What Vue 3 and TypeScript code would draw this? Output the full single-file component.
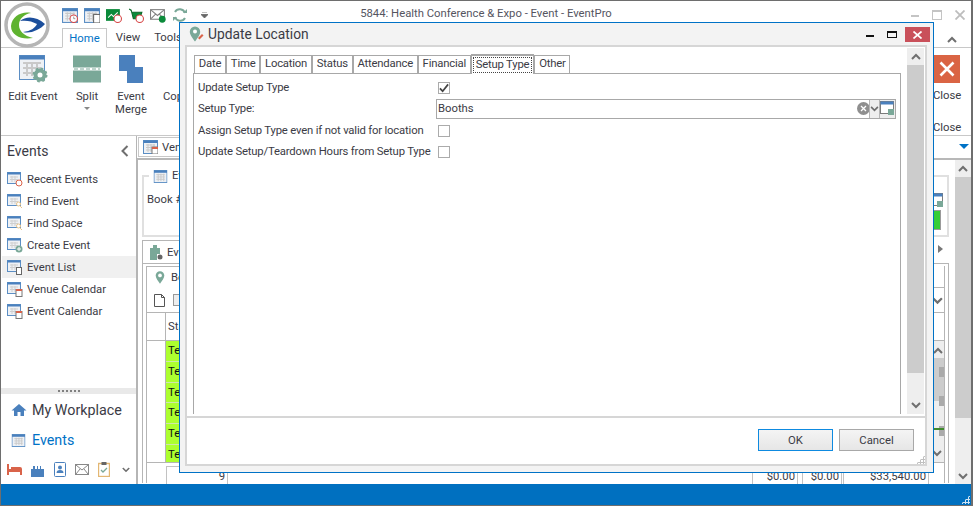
<script setup lang="ts">
const navItems = [
  { label: 'Recent Events', badge: 'clock' },
  { label: 'Find Event', badge: 'find' },
  { label: 'Find Space', badge: 'find' },
  { label: 'Create Event', badge: 'plus' },
  { label: 'Event List', badge: 'list', active: true },
  { label: 'Venue Calendar', badge: 'cal' },
  { label: 'Event Calendar', badge: 'cal' },
]
const tabs = ['Date', 'Time', 'Location', 'Status', 'Attendance', 'Financial', 'Setup Type', 'Other']
const rows = [
  { label: 'Update Setup Type', kind: 'check', on: true },
  { label: 'Setup Type:', kind: 'combo' },
  { label: 'Assign Setup Type even if not valid for location', kind: 'check', on: false },
  { label: 'Update Setup/Teardown Hours from Setup Type', kind: 'check', on: false },
]
const greenRows = [0, 1, 2, 3, 4, 5]
</script>

<template>
  <div class="window">
    <svg class="defs" width="0" height="0">
      <symbol id="cal" viewBox="0 0 15 14">
        <rect x="0.5" y="0.5" width="14" height="13" fill="#eef1f5" stroke="#5b8ec4" />
        <rect x="0.5" y="0.5" width="14" height="2.5" fill="#4a80bd" />
        <path d="M3 5h9M3 7.5h9M3 10h9M5 4v8M8 4v8M11 4v8" stroke="#c9c9c9" stroke-width="1" fill="none" />
      </symbol>
      <symbol id="pin" viewBox="0 0 12 16">
        <path d="M6 0.5a5.2 5.2 0 0 1 5.2 5.2C11.2 9 8 12.500 6 15.500 4 12.500 0.800 9 0.800 5.700A5.200 5.200 0 0 1 6 0.500z" fill="#7aa898" />
        <circle cx="6" cy="5.500" r="2.200" fill="#fff" />
      </symbol>
      <symbol id="chev" viewBox="0 0 10 7">
        <path d="M1 6l4-4 4 4" fill="none" stroke="#6f6f6f" stroke-width="2" />
      </symbol>
      <symbol id="chevd" viewBox="0 0 10 7">
        <path d="M1 1l4 4 4-4" fill="none" stroke="#6f6f6f" stroke-width="2" />
      </symbol>
      <symbol id="lookup" viewBox="0 0 15 15">
        <rect x="0.500" y="0.500" width="13" height="12" fill="#fff" stroke="#7c7c7c" />
        <rect x="0.500" y="0.500" width="13" height="3" fill="#4a80bd" />
        <rect x="8" y="8" width="6" height="6" fill="#7aa898" />
      </symbol>
    </svg>

    <header class="titlebar">
      <div class="logo">
        <svg viewBox="0 0 46 46" width="46" height="46">
          <circle cx="23" cy="23" r="21" fill="#fff" stroke="#b5b5b5" stroke-width="3.500" />
          <path d="M7 24C8 14 18 9 27 11 20 12 15 17 15 23c0 6 5 11 14 13C18 38 7 34 7 24z" fill="#5fb330" />
          <path d="M16 19c6-5 16-5 25 3-5 6-15 10-22 8 8-1 12-4 14-8-5-3-11-4-17-3z" fill="#1c4f9c" />
        </svg>
      </div>
      <div class="quick">
        <svg class="qi" viewBox="0 0 15 14"><use href="#cal" /><circle cx="11" cy="10" r="3.500" fill="#fff" stroke="#d64545" /><path d="M11 8v2h1.500" stroke="#666" stroke-width="0.600" fill="none" /></svg>
        <svg class="qi" viewBox="0 0 15 14"><use href="#cal" /><rect x="9" y="6" width="6" height="8" fill="#fff" stroke="#666" /></svg>
        <svg class="qi" viewBox="0 0 15 14"><rect x="0" y="1" width="13" height="11" fill="#0b8a3a" /><path d="M2 9l3-3 2 2 4-4" stroke="#fff" fill="none" /><circle cx="11" cy="10" r="3.500" fill="#fff" stroke="#d64545" /></svg>
        <svg class="qi" viewBox="0 0 15 14"><path d="M1 1l2 1 2 8h6l2-6H4" fill="#0b8a3a" stroke="#0b6a2a" /><circle cx="11" cy="10" r="3.500" fill="#fff" stroke="#d64545" /></svg>
        <svg class="qi" viewBox="0 0 15 14"><rect x="0.500" y="1.500" width="13" height="9" fill="#fff" stroke="#808080" /><path d="M1 2l6 5 6-5M1 10l4-4M13 10l-4-4" stroke="#808080" fill="none" /><circle cx="11.500" cy="10.500" r="3.200" fill="#0b8a3a" /></svg>
        <svg class="qi sync" viewBox="0 0 16 16"><path d="M13 6A5.500 5.500 0 0 0 3 5M3 10a5.500 5.500 0 0 0 10 1" fill="none" stroke="#7aa898" stroke-width="2" /><path d="M11 6h4V2zM5 10H1v4z" fill="#7aa898" /></svg>
        <svg class="qa" viewBox="0 0 7 6"><path d="M1 0h5M0 2.500h7L3.500 6z" stroke="#666" stroke-width="0.800" fill="#666" /></svg>
      </div>
      <div class="apptitle">5844: Health Conference &amp; Expo - Event - EventPro</div>
      <div class="winctl">
        <span class="wmin"></span><span class="wmax"></span>
        <svg width="10" height="10" viewBox="0 0 10 10"><path d="M0.500 0.500l9 9M9.500 0.500l-9 9" stroke="#bdbdbd" stroke-width="1.800" /></svg>
      </div>
    </header>

    <nav class="ribbontabs">
      <span class="rtab on">Home</span>
      <span class="rtab">View</span>
      <span class="rtab">Tools</span>
      <svg class="collapse" width="10" height="7"><use href="#chev" /></svg>
    </nav>

    <section class="ribbon">
      <div class="rbtn edit">
        <svg width="29" height="28" viewBox="0 0 29 28"><rect x="0.500" y="0.500" width="25" height="24" fill="#eef1f5" stroke="#5b8ec4" /><rect x="0.500" y="0.500" width="25" height="4" fill="#4a80bd" /><path d="M4 8h18M4 13h18M4 18h18M8 7v14M13 7v14M18 7v14" stroke="#c9c9c9" stroke-width="2" /><circle cx="21" cy="20" r="4.500" fill="#fff" stroke="#7aa898" stroke-width="4" /><circle cx="21" cy="20" r="6.500" fill="none" stroke="#7aa898" stroke-width="2" stroke-dasharray="2.500 2.600" /></svg>
        <span>Edit Event</span>
      </div>
      <div class="rbtn split">
        <svg width="28" height="27" viewBox="0 0 28 27"><rect width="28" height="12" fill="#7aa898" /><rect y="15" width="28" height="12" fill="#7aa898" /><path d="M1 13.500h26" stroke="#7aa898" stroke-dasharray="4 2" /></svg>
        <span>Split</span>
        <i class="tri"></i>
      </div>
      <div class="rbtn merge">
        <svg width="24" height="28" viewBox="0 0 24 28"><path d="M0 0h16v12h8v16H8V16H0z" fill="#4a80bd" /></svg>
        <span>Event<br />Merge</span>
      </div>
      <div class="rbtn copy"><span class="spacer"></span><span>Copy</span></div>
      <div class="rclose">
        <div class="closebox">
          <svg width="16" height="16" viewBox="0 0 16 16"><path d="M1.500 1.500l13 13M14.500 1.500l-13 13" stroke="#fff" stroke-width="2.600" /></svg>
        </div>
        <span class="c1">Close</span>
        <span class="c2">Close</span>
      </div>
    </section>

    <main class="main">
      <aside class="sidebar">
        <div class="sidehead">
          <span>Events</span>
          <svg width="8" height="12" viewBox="0 0 8 12"><path d="M6.500 1l-5 5 5 5" fill="none" stroke="#6f6f6f" stroke-width="2" /></svg>
        </div>
        <ul class="navlist">
          <li v-for="item in navItems" :key="item.label" :class="{ active: item.active }">
            <svg class="navicon" width="16" height="15" viewBox="0 0 16 15">
              <rect x="0.500" y="0.500" width="13" height="11" fill="#eef1f5" stroke="#5b8ec4" />
              <rect x="0.500" y="0.500" width="13" height="2" fill="#4a80bd" />
              <path d="M3 5h8M3 7.500h8M5 4v6M8 4v6" stroke="#cfcfcf" />
              <circle v-if="item.badge === 'clock'" cx="12" cy="11" r="3" fill="#fff" stroke="#d9634a" />
              <circle v-if="item.badge === 'find'" cx="11.500" cy="10" r="2" fill="#fff" stroke="#e8c48a" />
              <path v-if="item.badge === 'find'" d="M13 12l2 2" stroke="#e8c48a" />
              <circle v-if="item.badge === 'plus'" cx="12" cy="11" r="3.500" fill="#7aa898" />
              <path v-if="item.badge === 'plus'" d="M10 11h4M12 9v4" stroke="#fff" />
              <rect v-if="item.badge === 'list'" x="9.500" y="7.500" width="5" height="7" fill="#fff" stroke="#666" />
              <rect v-if="item.badge === 'cal'" x="9" y="7.500" width="6" height="7" fill="#fff" stroke="#777" />
              <rect v-if="item.badge === 'cal'" x="9" y="7" width="6" height="2" fill="#d9634a" />
            </svg>
            <span>{{ item.label }}</span>
          </li>
        </ul>
        <div class="splitter"><i v-for="n in 6" :key="n"></i></div>
        <div class="bigitem first">
          <svg width="16" height="14" viewBox="0 0 16 14"><path d="M8 1L0.500 7.500H3V13h3.500V9h3v4H13V7.500h2.500z" fill="#4a80bd" /></svg>
          <span>My Workplace</span>
        </div>
        <div class="bigitem blue">
          <svg width="15" height="13" viewBox="0 0 15 14"><use href="#cal" /></svg>
          <span>Events</span>
        </div>
        <div class="sideicons">
          <svg width="15" height="11" viewBox="0 0 15 11"><path d="M0 0h2v5h2V3h9a2 2 0 0 1 2 2v6h-2V8H2v3H0z" fill="#d9634a" /></svg>
          <svg width="13" height="14" viewBox="0 0 13 14"><path d="M0 14V6h2V3h2v3h2V3h1v3h2V3h1v3h3v8z" fill="#4a80bd" /></svg>
          <svg width="13" height="15" viewBox="0 0 13 15"><rect x="1.500" y="0.500" width="11" height="14" rx="1" fill="#fff" stroke="#4a80bd" /><circle cx="7" cy="5.500" r="2" fill="#4a80bd" /><path d="M3.500 11a3.500 3 0 0 1 7 0z" fill="#4a80bd" /></svg>
          <svg width="14" height="11" viewBox="0 0 14 11"><rect x="0.500" y="0.500" width="13" height="10" fill="#fff" stroke="#888" /><path d="M1 1l6 5 6-5M1 10l4-5M13 10L9 5" fill="none" stroke="#888" /></svg>
          <svg width="12" height="15" viewBox="0 0 12 15"><rect x="0.500" y="1.500" width="11" height="13" fill="#fff" stroke="#e3b773" stroke-width="1.400" /><rect x="3.500" y="0" width="5" height="3" fill="#666" /><path d="M3 8l2 2 4-4" stroke="#7aa898" stroke-width="1.300" fill="none" /></svg>
          <svg class="morechev" width="8" height="6" viewBox="0 0 10 7"><use href="#chevd" /></svg>
        </div>
      </aside>

      <div class="content">
        <div class="docstrip">
          <div class="doctab">
            <svg width="15" height="14" viewBox="0 0 15 14"><use href="#cal" /><rect x="9" y="7" width="6" height="7" fill="#fff" stroke="#777" /><rect x="9" y="7" width="6" height="2" fill="#d9634a" /></svg>
            <span>Venue</span>
          </div>
          <i class="bluetri"></i>
        </div>
        <div class="docbody">
          <div class="doc">
            <fieldset class="group">
              <legend><svg width="15" height="13" viewBox="0 0 15 14"><use href="#cal" /></svg> Event</legend>
              <div class="book">Book #</div>
              <div class="groupright">
                <svg width="15" height="15"><use href="#lookup" /></svg>
                <i class="greenbox"></i>
              </div>
            </fieldset>
            <div class="tabhead">
              <div class="evtab">
                <svg width="14" height="15" viewBox="0 0 14 15"><path d="M1 15V3h3V0h4v3h3v6H8v6z" fill="#7aa898" /><circle cx="11" cy="12" r="2.500" fill="#666" /></svg>
                <span>Event</span>
              </div>
              <i class="tritab"></i>
            </div>
            <div class="tabpane">
              <div class="innerhead">
                <div class="btab">
                  <svg width="10" height="15"><use href="#pin" /></svg>
                  <span>Booths</span>
                </div>
                <div class="hspace"></div>
              </div>
              <div class="inner">
                <div class="innertool">
                  <svg width="11" height="13" viewBox="0 0 11 13"><path d="M0.500 0.500h7l3 3v9h-10zM7.500 0.500v3h3" fill="#fff" stroke="#555" /></svg>
                  <svg width="11" height="13" viewBox="0 0 11 13"><rect x="0.500" y="0.500" width="8" height="11" fill="#eee" stroke="#999" /></svg>
                  <svg class="innerchev" width="11" height="8" viewBox="0 0 10 7"><use href="#chevd" /></svg>
                </div>
                <div class="gridhead"><span class="rowhead"></span><span class="statcol">Status</span></div>
                <div class="gridbody">
                  <div class="rowhead"></div>
                  <div class="greens">
                    <div v-for="n in greenRows" :key="n" class="green">Test</div>
                  </div>
                  <div class="innerscroll">
                    <svg width="10" height="7"><use href="#chev" /></svg>
                    <div class="ithumb"></div>
                    <i class="mark m1"></i><i class="mark m2"></i><i class="mark m3"></i><i class="gline"></i>
                    <svg class="idown" width="10" height="7"><use href="#chevd" /></svg>
                  </div>
                </div>
                <div class="totals">
                  <span class="cell c9">9</span>
                  <span class="cell m1c">$0.00</span>
                  <span class="cell m2c">$0.00</span>
                  <span class="cell m3c">$33,540.00</span>
                </div>
              </div>
            </div>
          </div>
          <div class="vscroll">
            <div class="sb-up"><svg width="10" height="7"><use href="#chev" /></svg></div>
            <div class="sb-thumb"></div>
            <div class="sb-track"></div>
            <div class="sb-down"><svg width="10" height="7"><use href="#chevd" /></svg></div>
          </div>
        </div>
      </div>
    </main>

    <footer class="status"><span class="grip"></span></footer>

    <div class="dialog">
      <div class="dlgtitle">
        <svg class="dlgpin" width="15" height="16" viewBox="0 0 15 16">
          <path d="M6 0.500a5.200 5.200 0 0 1 5.200 5.200C11.200 9 8 12.500 6 15.500 4 12.500 0.800 9 0.800 5.700A5.200 5.200 0 0 1 6 0.500z" fill="#7aa898" />
          <circle cx="6" cy="5.500" r="2" fill="#fff" />
          <path d="M9 12l4-4 1.500 1.500-4 4z" fill="#d9634a" />
        </svg>
        <span class="dlgname">Update Location</span>
        <div class="dlgctl">
          <span class="dmin"></span>
          <span class="dmax"></span>
          <span class="dclose">
            <svg width="9" height="8" viewBox="0 0 9 8"><path d="M0.500 0.500l8 7M8.500 0.500l-8 7" stroke="#fff" stroke-width="1.700" /></svg>
          </span>
        </div>
      </div>
      <div class="dlgframe">
        <div class="dlgmain">
          <div class="tabarea">
            <div class="tabstrip">
              <span v-for="t in tabs" :key="t" class="tab" :class="{ sel: t === 'Setup Type' }"><b v-if="t === 'Setup Type'">{{ t }}</b><template v-else>{{ t }}</template></span>
            </div>
            <div class="page">
              <div v-for="r in rows" :key="r.label" class="frow" :class="r.kind">
                <label>{{ r.label }}</label>
                <span v-if="r.kind === 'check'" class="cb">
                  <svg v-if="r.on" width="11" height="10" viewBox="0 0 11 10"><path d="M1 5.500l3 3 6-7.500" fill="none" stroke="#444" stroke-width="1.900" /></svg>
                </span>
                <div v-else class="combo">
                  <span class="cval">Booths</span>
                  <svg class="cclear" width="13" height="13" viewBox="0 0 13 13"><circle cx="6.500" cy="6.500" r="6.500" fill="#8f8f8f" /><path d="M4 4l5 5M9 4l-5 5" stroke="#fff" stroke-width="1.300" /></svg>
                  <span class="cdrop"><svg width="9" height="6" viewBox="0 0 10 7"><use href="#chevd" /></svg></span>
                  <span class="clook"><svg width="15" height="15"><use href="#lookup" /></svg></span>
                </div>
              </div>
            </div>
          </div>
          <div class="dscroll">
            <div class="ds-up"><svg width="10" height="7"><use href="#chev" /></svg></div>
            <div class="ds-thumb"></div>
            <div class="ds-track"></div>
            <div class="ds-up"><svg width="10" height="7"><use href="#chevd" /></svg></div>
          </div>
        </div>
        <div class="dlgfoot">
          <button class="btn ok">OK</button>
          <button class="btn">Cancel</button>
          <span class="grip small"></span>
        </div>
      </div>
    </div>
  </div>
</template>

<style>
html, body { margin: 0; padding: 0; background: #fff; }
</style>

<style scoped>
* { box-sizing: border-box; }
.defs { position: absolute; }
.window {
  position: relative;
  width: 973px;
  height: 506px;
  display: flex;
  flex-direction: column;
  overflow: hidden;
  background: #fff;
  border: 1px solid #6e6e6e;
  border-right-width: 2px;
  font-family: Roboto, "Liberation Sans", sans-serif;
  font-size: 11.3px;
  color: #3b3b45;
}
.titlebar { height: 27px; display: flex; align-items: center; position: relative; flex: none; }
.logo { position: absolute; left: 3px; top: 1px; z-index: 2; line-height: 0; }
.quick { display: flex; align-items: center; gap: 6px; margin-left: 61px; margin-top: 1px; }
.qi { width: 16px; height: 15px; }
.qi.sync { width: 16px; height: 16px; }
.qa { width: 7px; height: 6px; margin-left: 7px; }
.apptitle { position: absolute; left: 0; right: 0; text-align: center; top: 6px; color: #55555f; }
.winctl { margin-left: auto; display: flex; align-items: center; gap: 13px; margin-right: 6px; }
.wmin { width: 8px; height: 2px; background: #c4c4c4; margin-top: 3px; }
.wmax { width: 10px; height: 10px; border: 1px solid #c4c4c4; border-top-width: 2px; }

.ribbontabs { height: 20px; display: flex; align-items: flex-end; padding-left: 61px; border-bottom: 1px solid #c8c8c8; flex: none; position: relative; }
.rtab { height: 20px; line-height: 19px; margin-bottom: -1px; text-align: center; }
.rtab.on { color: #0072c6; background: #fff; border: 1px solid #c8c8c8; border-bottom-color: #fff; width: 45px; }
.rtab:nth-child(2) { width: 42px; }
.rtab:nth-child(3) { width: 38px; }
.collapse { position: absolute; left: 946px; top: 8px; }

.ribbon { height: 88px; display: flex; flex: none; border-bottom: 1px solid #c8c8c8; position: relative; }
.rbtn { display: flex; flex-direction: column; align-items: center; text-align: center; line-height: 13px; padding-top: 7px; position: relative; }
.rbtn span { margin-top: 7px; }
.rbtn svg { height: 28px; flex: none; }
.edit { width: 64px; }
.split { width: 40px; margin-left: 2px; }
.merge { width: 42px; margin-left: 3px; }
.copy { width: 40px; align-items: flex-start; margin-left: 11px; }
.copy .spacer { height: 28px; margin: 0; }
.tri { width: 0; height: 0; border: 3px solid transparent; border-top: 3px solid #888; margin-top: 4px; }
.rclose { margin-left: auto; width: 38px; display: flex; flex-direction: column; padding-top: 7px; position: relative; }
.closebox { width: 27px; height: 28px; background: #da6444; display: flex; align-items: center; justify-content: center; }
.c1 { margin-top: 6px; line-height: 14px; }
.c2 { margin-top: 18px; line-height: 14px; }

.main { flex: 1; min-height: 0; display: flex; }
.sidebar { width: 136px; flex: none; border-right: 1px solid #b5b5b5; display: flex; flex-direction: column; }
.sidehead { height: 30px; display: flex; align-items: center; justify-content: space-between; padding: 0 7px 0 6px; font-size: 14px; flex: none; }
.navlist { list-style: none; margin: 0; padding: 2px 0 0; flex: 1; }
.navlist li { height: 22px; display: flex; align-items: center; gap: 4px; padding-left: 5px; margin-left: 1px; }
.navlist li.active { background: #f0f0f0; }
.splitter { height: 6px; background: #e9e9e9; display: flex; align-items: center; justify-content: center; gap: 2px; flex: none; }
.splitter i { width: 2px; height: 2px; background: #808080; }
.bigitem { height: 30px; display: flex; align-items: center; gap: 5px; padding-left: 10px; font-size: 14.300px; flex: none; }
.bigitem.first { margin-top: 1px; }
.bigitem.blue { color: #0072c6; gap: 6px; }
.sideicons { height: 29px; display: flex; align-items: center; gap: 9px; padding-left: 6px; flex: none; }
.morechev { margin-left: 3px; }

.content { flex: 1; min-width: 0; display: flex; flex-direction: column; position: relative; }
.docstrip { height: 24px; display: flex; align-items: center; padding-left: 1px; border-bottom: 2px solid #b8b8b8; position: relative; flex: none; }
.doctab { height: 20px; width: 60px; border: 1px solid #c8c8c8; display: flex; align-items: center; gap: 4px; padding-left: 4px; }
.bluetri { position: absolute; right: 2px; top: 8px; width: 0; height: 0; border: 5px solid transparent; border-top: 5px solid #0072c6; }
.docbody { flex: 1; min-height: 0; display: flex; }
.doc { flex: 1; min-width: 0; padding: 0 6px 0 4px; border-left: 1px solid #b5b5b5; display: flex; flex-direction: column; }
.group { height: 68px; margin: 9px 0 0; padding: 0 3px; border: 2px solid #e0e0e0; position: relative; flex: none; }
.group legend { padding: 0 4px; margin-left: 2px; line-height: 12px; display: flex; align-items: center; gap: 4px; height: 14px; }
.book { margin-top: 10px; }
.groupright { position: absolute; right: 4px; top: 10px; display: flex; flex-direction: column; gap: 2px; width: 14px; }
.greenbox { width: 12px; height: 20px; background: #35cd35; border: 1px solid #9a9a9a; display: block; }
.tabhead { height: 24px; margin-top: 3px; display: flex; align-items: center; position: relative; flex: none; }
.evtab { height: 24px; width: 60px; border: 1px solid #b5b5b5; border-bottom: 0; display: flex; align-items: center; gap: 4px; padding-left: 6px; }
.tritab { position: absolute; right: 2px; top: 5px; width: 0; height: 0; border: 4px solid transparent; border-left: 5px solid #777; }
.tabpane { flex: 1; min-height: 0; border: 1px solid #b5b5b5; border-bottom: 0; padding: 2px 3px 0; position: relative; top: -1px; display: flex; flex-direction: column; }
.innerhead { height: 22px; display: flex; flex: none; }
.btab { width: 300px; border: 1px solid #b5b5b5; border-bottom: 0; display: flex; align-items: center; gap: 6px; padding-left: 8px; }
.hspace { flex: 1; border-bottom: 1px solid #b5b5b5; border-right: 1px solid #b5b5b5; }
.inner { flex: 1; min-height: 0; border: 1px solid #b5b5b5; border-width: 0 1px; display: flex; flex-direction: column; }
.innertool { height: 25px; display: flex; align-items: center; gap: 8px; padding-left: 7px; border-bottom: 1px solid #b5b5b5; flex: none; position: relative; }
.innerchev { position: absolute; right: 1px; top: 9px; }
.gridhead { height: 28px; display: flex; border-bottom: 1px solid #b5b5b5; flex: none; }
.rowhead { width: 19px; border-right: 1px solid #b5b5b5; display: block; flex: none; }
.statcol { padding: 7px 0 0 2px; }
.gridbody { height: 122px; display: flex; border-bottom: 1px solid #b5b5b5; flex: none; position: relative; }
.greens { flex: 1; display: flex; flex-direction: column; overflow: hidden; background: #adff2f; }
.green { height: 20.800px; flex: none; background: #adff2f; border-bottom: 1px solid #cfe8a8; line-height: 20px; padding-left: 2px; color: #111; }
.innerscroll { width: 13px; background: #eee; position: relative; flex: none; text-align: center; padding-top: 6px; line-height: 0; }
.ithumb { position: absolute; left: 0; right: 0; top: 17px; height: 43px; background: #ccc; }
.mark { position: absolute; right: 0; width: 5px; height: 10px; background: #aaa; }
.m1 { top: 26px; } .m2 { top: 55px; } .m3 { top: 85px; }
.gline { position: absolute; left: 0; right: 0; top: 87px; height: 2px; background: #3f8a2c; }
.idown { position: absolute; left: 1px; top: 109px; }
.totals { height: 30px; position: relative; flex: none; }
.cell { position: absolute; top: 3px; height: 30px; line-height: 20px; text-align: right; border: 1px solid #c2c2c2; border-bottom: 0; padding-right: 2px; }
.c9 { left: 19px; width: 62px; }
.m1c { left: 605px; width: 46px; }
.m2c { left: 655px; width: 40px; }
.m3c { left: 696px; width: 86px; }

.vscroll { width: 16px; flex: none; display: flex; flex-direction: column; background: #eee; }
.sb-up { height: 17px; display: flex; align-items: center; justify-content: center; }
.sb-thumb { height: 241px; background: #ccc; }
.sb-track { flex: 1; }
.sb-down { height: 16px; display: flex; align-items: center; justify-content: center; }

.status { height: 21px; background: #0070c0; flex: none; position: relative; }
.grip {
  position: absolute; right: 1px; bottom: 1px; width: 9px; height: 9px;
  background-image: radial-gradient(#cfe3f3 1px, transparent 1.200px);
  background-size: 3px 3px;
  clip-path: polygon(100% 0, 100% 100%, 0 100%);
}
.grip.small { right: 0; bottom: 0; background-image: radial-gradient(#c0c0c0 1px, transparent 1.200px); }

.dialog {
  position: absolute; left: 178px; top: 21px; width: 755px; height: 451px;
  background: #f3f3f3; border: 1px solid #0072c6; display: flex; flex-direction: column; padding: 0 6px 6px 5px;
}
.dlgtitle { height: 22px; display: flex; align-items: center; flex: none; }
.dlgpin { margin-left: 4px; }
.dlgname { font-size: 13.800px; margin-left: 4px; color: #3b3b45; }
.dlgctl { margin-left: auto; display: flex; align-items: center; margin-right: -3px; }
.dmin { width: 8px; height: 2px; background: #111; margin-top: 4px; margin-right: 13px; }
.dmax { width: 10px; height: 7px; border: 1px solid #111; border-top-width: 2px; margin-right: 8px; }
.dclose { width: 25px; height: 15px; background: #c9505a; display: flex; align-items: center; justify-content: center; margin-top: 1px; }
.dlgframe { flex: 1; min-height: 0; background: #fff; border: 2px solid #d6d6d6; display: flex; flex-direction: column; position: relative; }
.dlgmain { flex: 1; min-height: 0; display: flex; padding: 1px 1px 2px 6px; gap: 6px; }
.tabarea { flex: 1; min-width: 0; display: flex; flex-direction: column; }
.tabstrip { display: flex; height: 25px; align-items: flex-end; padding-left: 1px; position: relative; z-index: 1; flex: none; letter-spacing: -0.2px; }
.tab { height: 18px; line-height: 16px; padding: 0 3.800px; border: 1px solid #a8a8a8; border-bottom: 0; background: #fff; }
.tab.sel { height: 20px; padding: 1px 1px 0; border-width: 2px 1px 0; margin-bottom: -1px; line-height: 16px; }
.tab.sel b { font-weight: 400; outline: 1px dotted #444; outline-offset: -1px; padding: 0 3px; display: block; }
.page { flex: 1; min-height: 0; border: 1px solid #a8a8a8; border-width: 1px 1px 0; padding-top: 3px; }
.frow { display: flex; align-items: center; height: 21px; padding-left: 4px; }
.frow.combo { margin-bottom: 1px; }
.frow label { width: 239px; flex: none; white-space: nowrap; letter-spacing: -0.18px; }
.cb { width: 12px; height: 12px; border: 1px solid #ababab; background: #fff; margin-left: 1px; display: flex; align-items: center; justify-content: center; }
.combo .combo { flex: 1; margin-right: 4px; height: 20px; border: 1px solid #a8a8a8; display: flex; align-items: center; margin-left: -1px; margin-bottom: 0; padding: 0; }
.cval { flex: 1; padding-left: 1px; }
.cclear { margin-right: -1px; }
.cdrop { width: 10px; height: 18px; background: #eee; border-left: 1px solid #b5b5b5; display: flex; align-items: center; justify-content: center; position: relative; }
.clook { width: 16px; height: 18px; background: #eee; border-left: 1px solid #b5b5b5; display: flex; align-items: center; justify-content: center; }
.dscroll { width: 17px; flex: none; display: flex; flex-direction: column; background: #eee; }
.ds-up { height: 17px; display: flex; align-items: center; justify-content: center; }
.ds-thumb { height: 308px; background: #ccc; }
.ds-track { flex: 1; }
.dlgfoot { height: 48px; flex: none; border-top: 2px solid #d6d6d6; display: flex; justify-content: flex-end; gap: 6px; padding: 11px 11px 0 0; position: relative; }
.btn { width: 75px; height: 22px; border: 1px solid #a8a8a8; background: linear-gradient(#f4f4f4, #e6e6e6); font: inherit; color: inherit; padding: 0; }
.btn.ok { border-color: #0e8ae0; }
</style>
